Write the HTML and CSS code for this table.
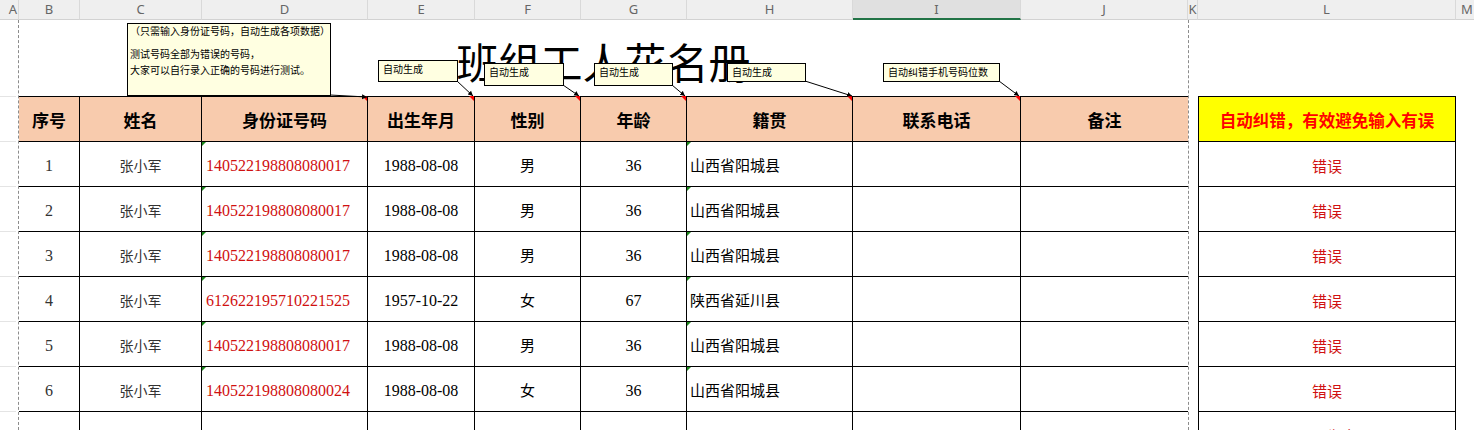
FILE: index.html
```html
<!DOCTYPE html>
<html lang="zh-CN">
<head>
<meta charset="utf-8">
<title>班组工人花名册</title>
<link rel="stylesheet" href="styles.css">
</head>
<body>
<div class="colhead">
  <div class="ch w-a ch-a">A</div>
  <div class="ch w-b">B</div>
  <div class="ch w-c">C</div>
  <div class="ch w-d">D</div>
  <div class="ch w-e">E</div>
  <div class="ch w-f">F</div>
  <div class="ch w-g">G</div>
  <div class="ch w-h">H</div>
  <div class="ch w-i ch-sel">I</div>
  <div class="ch w-j">J</div>
  <div class="ch w-k">K</div>
  <div class="ch w-l">L</div>
  <div class="ch w-m ch-m">M</div>
</div>

<div class="sheet">
  <div class="col-a">
    <div class="a-top"></div>
    <div class="a-row"></div>
    <div class="a-row"></div>
    <div class="a-row"></div>
    <div class="a-row"></div>
    <div class="a-row"></div>
    <div class="a-row"></div>
    <div class="a-row"></div>
    <div class="a-row"></div>
  </div>

  <div class="main">
    <div class="title-area"><h1 class="title">班组工人花名册</h1></div>
    <div class="roster">
      <div class="hd">序号</div>
      <div class="hd">姓名</div>
      <div class="hd flag">身份证号码</div>
      <div class="hd flag">出生年月</div>
      <div class="hd flag">性别</div>
      <div class="hd flag">年龄</div>
      <div class="hd flag">籍贯</div>
      <div class="hd flag">联系电话</div>
      <div class="hd">备注</div>

      <div class="td c num grey">1</div>
      <div class="td c name">张小军</div>
      <div class="td l id tag">140522198808080017</div>
      <div class="td c num">1988-08-08</div>
      <div class="td c cn">男</div>
      <div class="td c num">36</div>
      <div class="td l cn tag">山西省阳城县</div>
      <div class="td"></div>
      <div class="td"></div>

      <div class="td c num grey">2</div>
      <div class="td c name">张小军</div>
      <div class="td l id tag">140522198808080017</div>
      <div class="td c num">1988-08-08</div>
      <div class="td c cn">男</div>
      <div class="td c num">36</div>
      <div class="td l cn tag">山西省阳城县</div>
      <div class="td"></div>
      <div class="td"></div>

      <div class="td c num grey">3</div>
      <div class="td c name">张小军</div>
      <div class="td l id tag">140522198808080017</div>
      <div class="td c num">1988-08-08</div>
      <div class="td c cn">男</div>
      <div class="td c num">36</div>
      <div class="td l cn tag">山西省阳城县</div>
      <div class="td"></div>
      <div class="td"></div>

      <div class="td c num grey">4</div>
      <div class="td c name">张小军</div>
      <div class="td l id tag">612622195710221525</div>
      <div class="td c num">1957-10-22</div>
      <div class="td c cn">女</div>
      <div class="td c num">67</div>
      <div class="td l cn tag">陕西省延川县</div>
      <div class="td"></div>
      <div class="td"></div>

      <div class="td c num grey">5</div>
      <div class="td c name">张小军</div>
      <div class="td l id tag">140522198808080017</div>
      <div class="td c num">1988-08-08</div>
      <div class="td c cn">男</div>
      <div class="td c num">36</div>
      <div class="td l cn tag">山西省阳城县</div>
      <div class="td"></div>
      <div class="td"></div>

      <div class="td c num grey">6</div>
      <div class="td c name">张小军</div>
      <div class="td l id tag">140522198808080024</div>
      <div class="td c num">1988-08-08</div>
      <div class="td c cn">女</div>
      <div class="td c num">36</div>
      <div class="td l cn tag">山西省阳城县</div>
      <div class="td"></div>
      <div class="td"></div>

      <div class="td"></div>
      <div class="td"></div>
      <div class="td"></div>
      <div class="td"></div>
      <div class="td"></div>
      <div class="td"></div>
      <div class="td"></div>
      <div class="td"></div>
      <div class="td"></div>
    </div>
  </div>

  <div class="col-k"></div>

  <div class="side">
    <div class="side-top"></div>
    <div class="check">
      <div class="check-hd">自动纠错，有效避免输入有误</div>
      <div class="check-td">错误</div>
      <div class="check-td">错误</div>
      <div class="check-td">错误</div>
      <div class="check-td">错误</div>
      <div class="check-td">错误</div>
      <div class="check-td">错误</div>
      <div class="check-td">号码为空</div>
    </div>
  </div>

  <div class="col-m"></div>
</div>

<svg class="leaders" width="1474" height="430" viewBox="0 0 1474 430">
  <defs>
    <marker id="arr" markerWidth="6" markerHeight="6" refX="5" refY="3" orient="auto" markerUnits="userSpaceOnUse">
      <path d="M0,0.5 L5,3 L0,5.5 Z" fill="#000"/>
    </marker>
  </defs>
  <g stroke="#000" stroke-width="1" fill="none" marker-end="url(#arr)">
    <line x1="330" y1="95" x2="367" y2="97"/>
    <line x1="457" y1="81" x2="473" y2="96"/>
    <line x1="563" y1="85" x2="579" y2="96"/>
    <line x1="672" y1="85" x2="685" y2="96"/>
    <line x1="805" y1="81" x2="852" y2="96"/>
    <line x1="999" y1="81" x2="1019" y2="96"/>
  </g>
</svg>

<div class="note note-1">
  <p class="note-first">（只需输入身份证号码，自动生成各项数据）</p>
  <p>测试号码全部为错误的号码，</p>
  <p>大家可以自行录入正确的号码进行测试。</p>
</div>
<div class="note note-2">自动生成</div>
<div class="note note-3">自动生成</div>
<div class="note note-4">自动生成</div>
<div class="note note-5">自动生成</div>
<div class="note note-6">自动纠错手机号码位数</div>
</body>
</html>
```

FILE: styles.css
```css
* { box-sizing: border-box; }

html, body { margin: 0; padding: 0; }

body {
  position: relative;
  width: 1474px;
  height: 430px;
  overflow: hidden;
  background: #fff;
  color: #000;
  font-family: "Noto Sans CJK SC", "Noto Sans", sans-serif;
}

/* ---------- column letters ---------- */
.colhead {
  display: flex;
  height: 20px;
  background: #efefef;
}
.ch {
  flex: none;
  height: 20px;
  border-right: 1px solid #d9d9d9;
  border-bottom: 1px solid #d2d2d2;
  font: 13px/19px "Noto Sans", "Liberation Sans", sans-serif;
  color: #666;
  text-align: center;
}
.ch-a { text-align: right; padding-right: 1px; }
.ch-m { text-align: left; padding-left: 5px; border-right: none; }
.ch-sel {
  background: #e0e0e0;
  border-bottom: 2px solid #217346;
}

.w-a { width: 19px; }
.w-b { width: 61px; }
.w-c { width: 122px; }
.w-d { width: 166px; }
.w-e { width: 107px; }
.w-f { width: 106px; }
.w-g { width: 106px; }
.w-h { width: 166px; }
.w-i { width: 168px; }
.w-j { width: 167px; }
.w-k { width: 10px; }
.w-l { width: 258px; }
.w-m { width: 18px; }

/* ---------- sheet body ---------- */
.sheet {
  display: flex;
  height: 410px;
}

.col-a {
  flex: none;
  width: 19px;
  border-right: 1px dashed #8c8c8c;
}
.a-top {
  width: 16px;
  height: 77px;
  border-bottom: 1px solid #e4e4e4;
}
.a-row {
  width: 16px;
  height: 45px;
  border-bottom: 1px solid #e4e4e4;
}

.main {
  flex: none;
  width: 1169px;
}

.title-area {
  height: 76px;
  padding-top: 20px;
}
.title {
  margin: 0;
  font-size: 42px;
  line-height: 42px;
  font-weight: 400;
  text-align: center;
  letter-spacing: 0;
}

.roster {
  display: grid;
  grid-template-columns: 61px 122px 166px 107px 106px 106px 166px 168px 167px;
  grid-auto-rows: 45px;
  border-top: 1px solid #000;
}
.roster > div {
  position: relative;
  display: flex;
  align-items: center;
  border-right: 1px solid #000;
  border-bottom: 1px solid #000;
  white-space: nowrap;
}
.roster > div:nth-child(9n) { border-right: none; }

.hd {
  justify-content: center;
  background: #f8cbad;
  font-size: 17px;
  font-weight: 700;
  padding-top: 1px;
}
.hd.flag::after {
  content: "";
  position: absolute;
  top: -1px;
  right: 0;
  border-top: 5px solid #f00;
  border-left: 5px solid transparent;
}

.td { font-size: 15px; }
.c { justify-content: center; }
.l { padding-left: 3px; }

.num {
  font-family: "Liberation Serif", serif;
  font-size: 16px;
  padding-top: 3px;
}
.grey { color: #333; }
.name { color: #333; font-size: 14px; padding-top: 2px; }
.cn { font-size: 15px; padding-top: 1px; }
.id {
  font-family: "Liberation Serif", serif;
  font-size: 16px;
  color: #d01010;
  padding-left: 4px;
  padding-top: 3px;
}
.tag::before {
  content: "";
  position: absolute;
  top: 0;
  left: 0;
  border-top: 4px solid #1d8a1d;
  border-right: 4px solid transparent;
}

.col-k {
  flex: none;
  width: 10px;
  border-left: 1px dashed #8c8c8c;
}

.side {
  flex: none;
  width: 258px;
}
.side-top { height: 76px; }
.check {
  border-top: 1px solid #000;
  border-left: 1px solid #000;
  border-right: 1px solid #000;
}
.check-hd,
.check-td {
  display: flex;
  align-items: center;
  justify-content: center;
  height: 45px;
  border-bottom: 1px solid #000;
  white-space: nowrap;
}
.check-hd {
  background: #ffff00;
  color: #f00;
  font-size: 16.5px;
  font-weight: 700;
  padding-top: 1px;
}
.check-td {
  color: #d01010;
  font-size: 15px;
  padding-top: 2px;
}

.col-m {
  flex: none;
  width: 18px;
}

/* ---------- comments (overlay) ---------- */
.leaders {
  position: absolute;
  left: 0;
  top: 0;
  pointer-events: none;
}

.note {
  position: absolute;
  background: #ffffe1;
  border: 1px solid #000;
  font-size: 10px;
  line-height: 12px;
  white-space: nowrap;
  padding: 2px 4px;
}
.note p { margin: 0; line-height: 16px; }
.note .note-first { line-height: 14px; margin-bottom: 8px; }

.note-1 { left: 127px; top: 23px; width: 204px; height: 73px; padding: 0 2px; }
.note-2 { left: 378px; top: 60px; width: 80px; height: 22px; }
.note-3 { left: 484px; top: 63px; width: 80px; height: 23px; }
.note-4 { left: 594px; top: 63px; width: 79px; height: 23px; }
.note-5 { left: 727px; top: 63px; width: 79px; height: 19px; }
.note-6 { left: 883px; top: 63px; width: 117px; height: 19px; }
```
